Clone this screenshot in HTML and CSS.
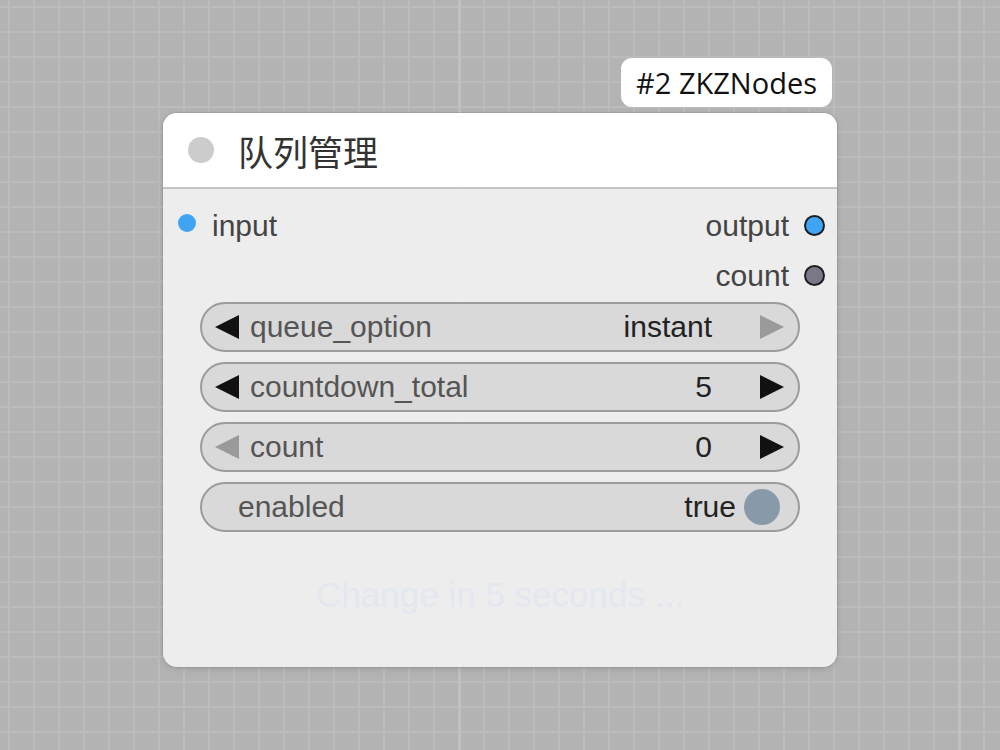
FILE: index.html
```html
<!DOCTYPE html>
<html lang="zh">
<head>
    <meta charset="UTF-8">
    <meta name="viewport" content="width=device-width, initial-scale=1.0">
    <title>队列管理</title>
    <link rel="stylesheet" href="styles.css">
</head>
<body>
    <div class="canvas">
        <!-- node placed on the graph canvas -->
        <div class="node">
            <div class="badge">#2 ZKZNodes</div>

            <div class="node-title">
                <span class="title-dot"></span>
                <span class="title-text">队列管理</span>
            </div>

            <div class="node-body">
                <div class="slot-row">
                    <div class="slot slot-in">
                        <span class="dot dot-input"></span>
                        <span>input</span>
                    </div>
                    <div class="slot slot-out">
                        <span>output</span>
                        <span class="dot dot-output"></span>
                    </div>
                </div>
                <div class="slot-row">
                    <div></div>
                    <div class="slot slot-out">
                        <span>count</span>
                        <span class="dot dot-count"></span>
                    </div>
                </div>

                <div class="widgets">
                    <div class="widget">
                        <span class="arrow arrow-left"></span>
                        <span class="w-label">queue_option</span>
                        <span class="w-value">instant</span>
                        <span class="arrow arrow-right off"></span>
                    </div>
                    <div class="widget">
                        <span class="arrow arrow-left"></span>
                        <span class="w-label">countdown_total</span>
                        <span class="w-value">5</span>
                        <span class="arrow arrow-right"></span>
                    </div>
                    <div class="widget">
                        <span class="arrow arrow-left off"></span>
                        <span class="w-label">count</span>
                        <span class="w-value">0</span>
                        <span class="arrow arrow-right"></span>
                    </div>
                    <div class="widget toggle">
                        <span class="w-label">enabled</span>
                        <span class="w-value">true</span>
                        <span class="knob"></span>
                    </div>
                </div>

                <p class="status">Change in 5 seconds ...</p>
            </div>
        </div>
    </div>
</body>
</html>
```

FILE: styles.css
```css
body {
    margin: 0;
    font-family: 'Liberation Sans', Arial, sans-serif;
}

.canvas {
    position: relative;
    width: 1000px;
    height: 750px;
    overflow: hidden;
    background-color: #b3b3b3;
    background-image:
        linear-gradient(to right, #c0c0c0 0 3px, transparent 3px),
        linear-gradient(to right, #bbbbbb 0 2px, transparent 2px),
        linear-gradient(to bottom, #bbbbbb 0 2px, transparent 2px);
    background-size: 500px 100%, 25px 25px, 25px 25px;
    background-position: 458px 0, 8px 0, 0 6px;
}

.node {
    position: absolute;
    left: 163px;
    top: 113px;
    width: 674px;
    height: 554px;
    border-radius: 14px;
    background: rgba(241, 241, 241, 0.93);
    box-shadow: 0 0 0 1px rgba(0, 0, 0, 0.08), 0 2px 6px rgba(0, 0, 0, 0.12);
}

.badge {
    position: absolute;
    right: 5px;
    top: -55px;
    height: 49px;
    padding: 0 15px;
    display: flex;
    align-items: center;
    background: #fff;
    border-radius: 11px;
    font-family: 'Open Sans', 'Noto Sans', sans-serif;
    font-size: 29px;
    color: #111;
}

.node-title {
    height: 74px;
    display: flex;
    align-items: center;
    background: #fff;
    border-radius: 14px 14px 0 0;
    border-bottom: 2px solid #c6c6c6;
}

.title-dot {
    width: 26px;
    height: 26px;
    margin-left: 25px;
    border-radius: 50%;
    background: #cccccc;
}

.title-text {
    margin-left: 24px;
    font-family: 'Noto Sans CJK SC', sans-serif;
    font-size: 35px;
    color: #333;
}

.node-body {
    padding-top: 12px;
}

.slot-row {
    height: 50px;
    display: flex;
    justify-content: space-between;
    align-items: center;
    font-size: 30px;
    color: #444;
}

.slot {
    display: flex;
    align-items: center;
}

.slot-in {
    padding-left: 15px;
    gap: 16px;
}

.slot-out {
    padding-right: 12px;
    gap: 15px;
}

.dot {
    border-radius: 50%;
    box-sizing: border-box;
}

.dot-input {
    width: 18px;
    height: 18px;
    background: #40a4f4;
    margin-top: -6px;
}

.dot-output {
    width: 21px;
    height: 21px;
    background: #40a4f4;
    border: 2px solid #1e1e1e;
    margin-top: -2px;
}

.dot-count {
    width: 21px;
    height: 21px;
    background: #7a7888;
    border: 2px solid #1e1e1e;
    margin-top: -2px;
}

.widgets {
    margin: 1px 37px 0;
    display: flex;
    flex-direction: column;
    gap: 10px;
}

.widget {
    height: 50px;
    box-sizing: border-box;
    display: flex;
    align-items: center;
    padding: 0 14px 0 13px;
    border: 2px solid #9c9c9c;
    border-radius: 25px;
    background: #d9d9d9;
    font-size: 30px;
}

.w-label {
    flex: 1;
    margin-left: 11px;
    color: #555;
}

.w-value {
    color: #222;
}

.arrow {
    width: 0;
    height: 0;
    border-top: 12px solid transparent;
    border-bottom: 12px solid transparent;
}

.arrow-left {
    border-right: 24px solid #111;
}

.arrow-right {
    margin-left: 48px;
    border-left: 24px solid #111;
}

.arrow-left.off {
    border-right-color: #9a9a9a;
}

.arrow-right.off {
    border-left-color: #9a9a9a;
}

.toggle {
    padding: 0 18px 0 22px;
}

.toggle .w-label {
    margin-left: 14px;
}

.knob {
    width: 36px;
    height: 36px;
    margin-left: 8px;
    border-radius: 50%;
    background: #8899aa;
}

.status {
    margin: 43px 0 0;
    text-align: center;
    font-size: 35px;
    line-height: 40px;
    color: #e3e7ef;
}
```
